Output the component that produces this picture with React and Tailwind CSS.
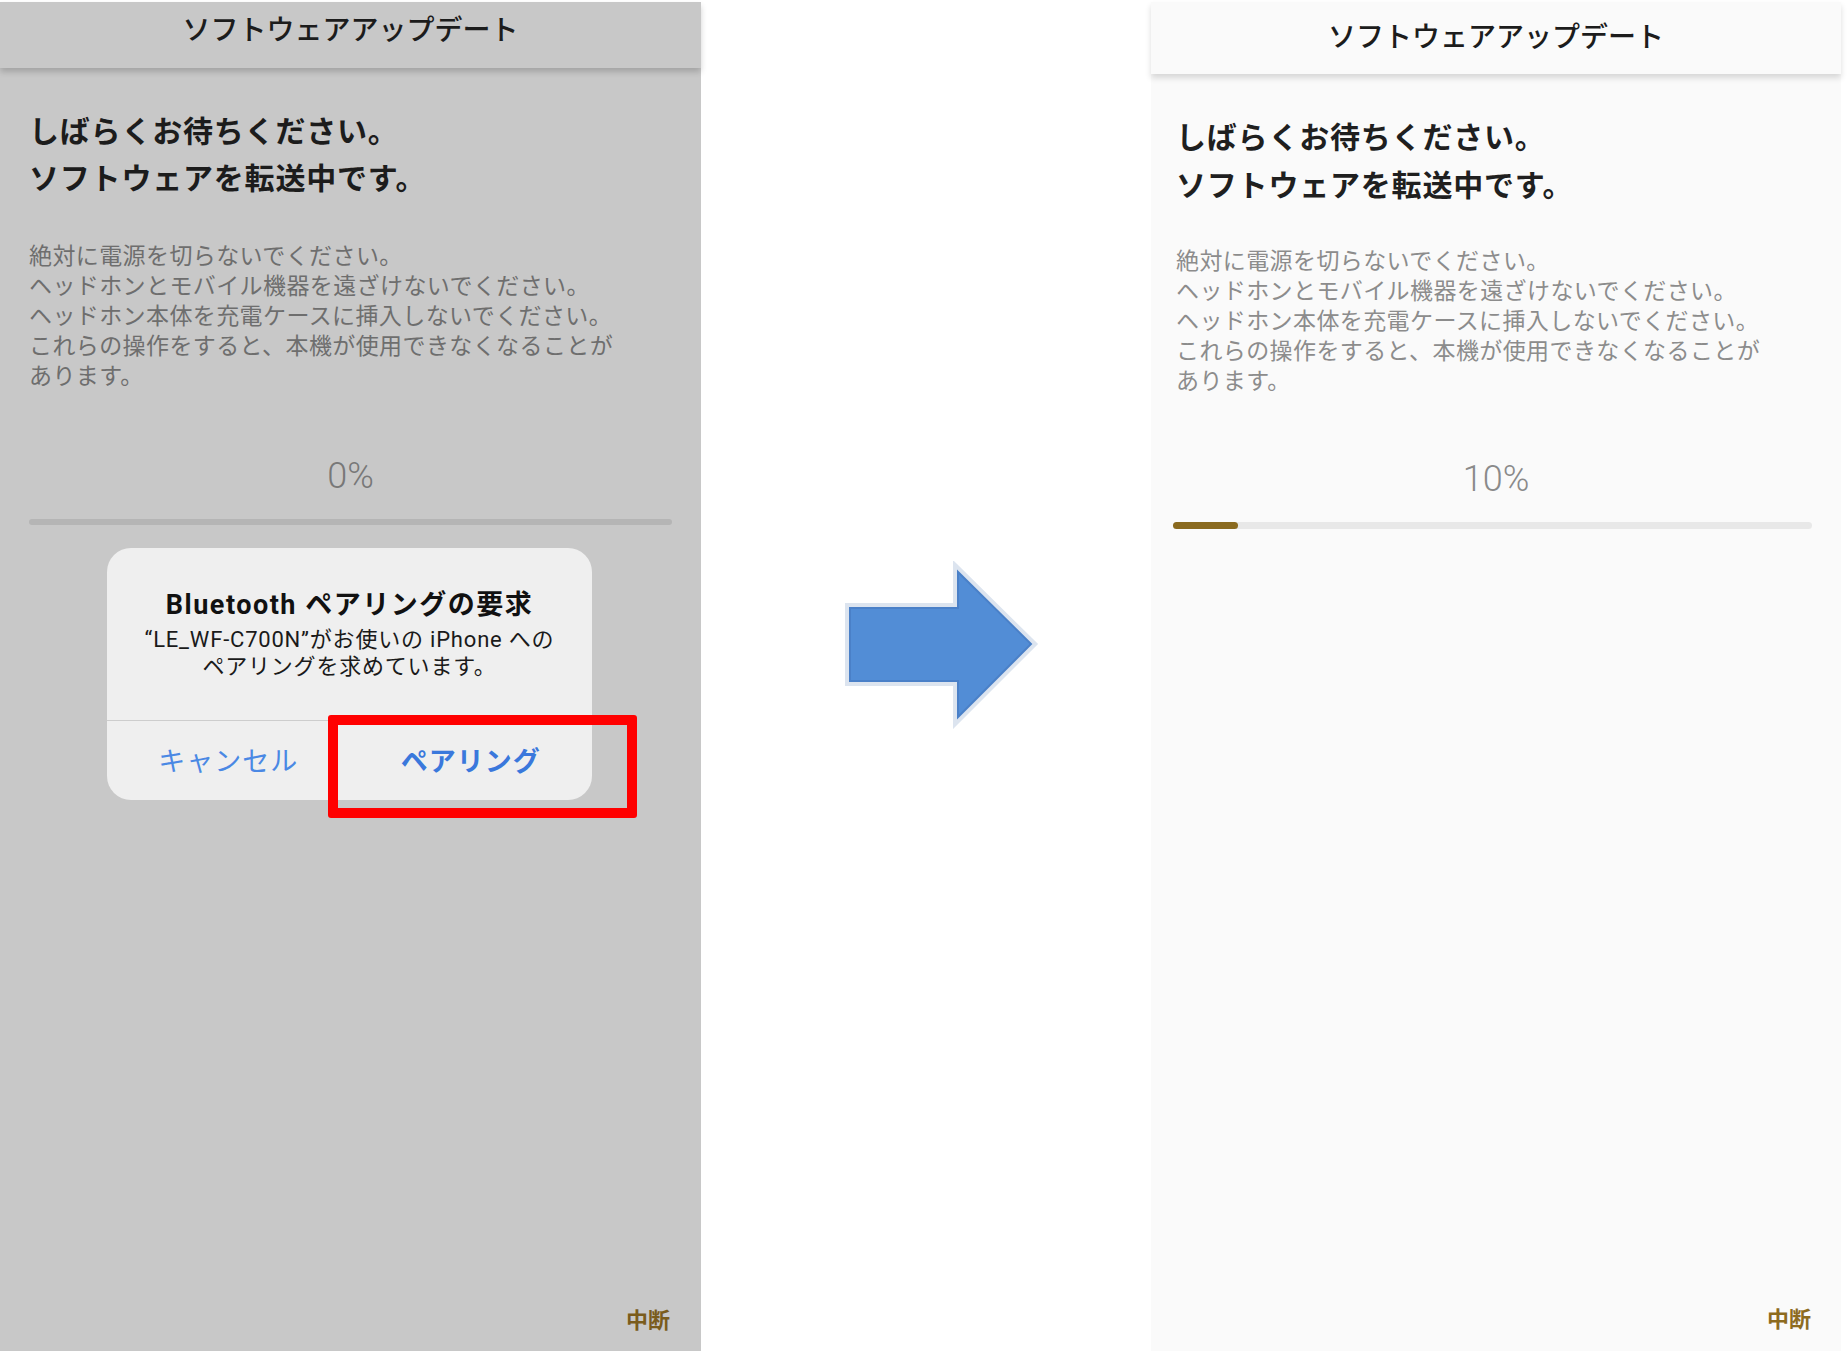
import React from "react"

const jp = "font-['Noto_Sans_CJK_JP',sans-serif]"
const mixed = "font-['Roboto','Noto_Sans_CJK_JP',sans-serif]"

const lines = [
  "絶対に電源を切らないでください。",
  "ヘッドホンとモバイル機器を遠ざけないでください。",
  "ヘッドホン本体を充電ケースに挿入しないでください。",
  "これらの操作をすると、本機が使用できなくなることが",
  "あります。",
]

const Arrow = () => (
  <svg width="196" height="168" viewBox="0 0 196 168">
    <polygon
      points="5,47 113,47 113,11 186,83 113,156 113,120 5,120"
      fill="#dce4ef"
      stroke="#dce4ef"
      strokeWidth="10"
      strokeLinejoin="miter"
    />
    <polygon
      points="5,47 113,47 113,11 186,83 113,156 113,120 5,120"
      fill="#528dd6"
      stroke="#4a80c8"
      strokeWidth="2"
    />
  </svg>
)

const PairingDialog = () => (
  <div className="relative ml-[107px] mt-[23px] w-[485px] h-[252px] rounded-[24px] bg-[#efefef] flex flex-col">
    <div className="h-[172px] pt-[40px] text-center">
      <div className={`${mixed} text-[27px] leading-[34px] font-bold text-[#111] tracking-[1.5px]`}>
        Bluetooth ペアリングの要求
      </div>
      <div className={`${mixed} mt-[4px] text-[22px] leading-[27px] text-[#1a1a1a] tracking-[0.8px]`}>
        “LE_WF-C700N”がお使いの iPhone への
        <br />
        ペアリングを求めています。
      </div>
    </div>
    <div className="h-px bg-[#cdcdcd]" />
    <div className="flex-1 grid grid-cols-2">
      <div className={`${jp} flex items-center justify-center text-[27px] text-[#4a88e4] tracking-[1px]`}>
        キャンセル
      </div>
      <div className={`${jp} flex items-center justify-center text-[27px] font-bold text-[#3a78dc] tracking-[1px]`}>
        ペアリング
      </div>
    </div>
    {/* annotation box */}
    <div className="absolute left-[221px] top-[167px] w-[309px] h-[103px] border-[10px] border-[#ff0000] rounded-[3px]" />
  </div>
)

const LeftScreen = () => (
  <div className="w-[701px] h-[1349px] bg-[#c8c8c8] flex flex-col">
    <div className="relative z-10 h-[66px] pt-[9px] bg-[#c8c8c8] shadow-[0_4px_6px_rgba(0,0,0,0.18)] text-center">
      <span className={`${jp} text-[28px] leading-[34px] font-medium text-[#1c1c1c]`}>ソフトウェアアップデート</span>
    </div>
    <div className="px-[29px]">
      <h1 className={`${jp} mt-[38px] text-[30px] leading-[47px] font-bold tracking-[0.8px] text-[#1c1c1c]`}>
        しばらくお待ちください。
        <br />
        ソフトウェアを転送中です。
      </h1>
      <div className={`${jp} mt-[39px] text-[23px] leading-[30px] tracking-[0.4px] text-[#6e6e6e]`}>
        {lines.map((l) => (
          <div key={l}>{l}</div>
        ))}
      </div>
      <div className="mt-[66px] text-center font-['Roboto',sans-serif] font-light text-[36px] leading-[42px] text-[#787878]">
        0%
      </div>
      <div className="mt-[22px] h-[6px] rounded-full bg-[#b5b5b5]" />
    </div>
    <PairingDialog />
    <div className="mt-auto self-end pr-[31px] pb-[17px]">
      <span className={`${jp} text-[22px] leading-[26px] font-bold text-[#7a5c1c]`}>中断</span>
    </div>
  </div>
)

const RightScreen = () => (
  <div className="w-[690px] h-[1349px] bg-[#fafafa] flex flex-col">
    <div className="relative z-10 h-[72px] pt-[16px] bg-[#fafafa] shadow-[0_4px_6px_rgba(0,0,0,0.14)] text-center">
      <span className={`${jp} text-[28px] leading-[34px] font-medium text-[#1c1c1c]`}>ソフトウェアアップデート</span>
    </div>
    <div className="px-[25px]">
      <h1 className={`${jp} mt-[37px] text-[30px] leading-[48px] font-bold tracking-[0.8px] text-[#1f1f1f]`}>
        しばらくお待ちください。
        <br />
        ソフトウェアを転送中です。
      </h1>
      <div className={`${jp} mt-[37px] text-[23px] leading-[30px] tracking-[0.4px] text-[#8c8c8c]`}>
        {lines.map((l) => (
          <div key={l}>{l}</div>
        ))}
      </div>
      <div className="mt-[64px] text-center font-['Roboto',sans-serif] font-light text-[36px] leading-[42px] text-[#8a8a8a]">
        10%
      </div>
      <div className="mt-[22px] -ml-[3px] w-[639px] h-[7px] rounded-full bg-[#e8e8e8]">
        <div className="w-[65px] h-full rounded-full bg-[#8a6a1f]" />
      </div>
    </div>
    <div className="mt-auto self-end pr-[30px] pb-[18px]">
      <span className={`${jp} text-[22px] leading-[26px] font-bold text-[#8d6b1f]`}>中断</span>
    </div>
  </div>
)

export default function App() {
  return (
    <div className="w-[1847px] h-[1356px] bg-white pt-[2px] flex">
      <LeftScreen />
      <div className="w-[450px] pl-[144px] pt-[559px]">
        <Arrow />
      </div>
      <RightScreen />
    </div>
  )
}
